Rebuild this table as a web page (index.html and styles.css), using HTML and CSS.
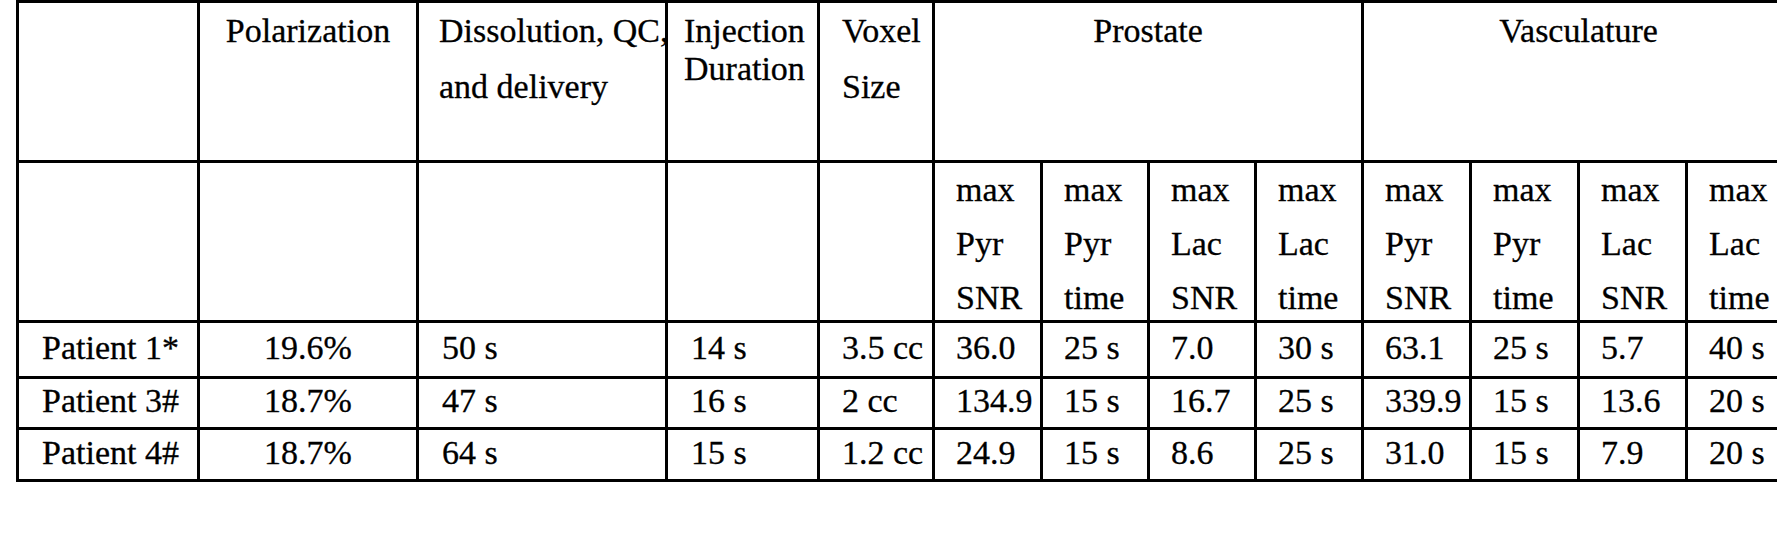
FILE: index.html
```html
<!DOCTYPE html>
<html lang="en">
<head>
  <meta charset="UTF-8">
  <title>Hyperpolarized pyruvate – patient summary</title>
  <link rel="stylesheet" href="styles.css">
</head>
<body>
  <table class="results">
    <colgroup>
      <col class="c-label">
      <col class="c-pol">
      <col class="c-diss">
      <col class="c-inj">
      <col class="c-vox">
      <col class="c-m108">
      <col class="c-m107">
      <col class="c-m107">
      <col class="c-m107">
      <col class="c-m108">
      <col class="c-m108">
      <col class="c-m108">
      <col class="c-m108">
    </colgroup>

    <tr class="group-row">
      <td></td>
      <td class="center">Polarization</td>
      <td class="pad-20">Dissolution, QC,<br>and delivery</td>
      <td class="inj">Injection<br>Duration</td>
      <td class="pad-22">Voxel<br>Size</td>
      <td class="center" colspan="4">Prostate</td>
      <td class="center" colspan="4">Vasculature</td>
    </tr>

    <tr class="metric-row">
      <td></td>
      <td></td>
      <td></td>
      <td></td>
      <td></td>
      <td><div class="lines">max<br>Pyr<br>SNR</div></td>
      <td><div class="lines">max<br>Pyr<br>time</div></td>
      <td><div class="lines">max<br>Lac<br>SNR</div></td>
      <td><div class="lines">max<br>Lac<br>time</div></td>
      <td><div class="lines">max<br>Pyr<br>SNR</div></td>
      <td><div class="lines">max<br>Pyr<br>time</div></td>
      <td><div class="lines">max<br>Lac<br>SNR</div></td>
      <td><div class="lines">max<br>Lac<br>time</div></td>
    </tr>

    <tr class="data-row first">
      <td class="pad-23">Patient 1*</td>
      <td class="center">19.6%</td>
      <td class="pad-23">50 s</td>
      <td class="pad-23">14 s</td>
      <td class="pad-22">3.5 cc</td>
      <td>36.0</td>
      <td>25 s</td>
      <td>7.0</td>
      <td>30 s</td>
      <td>63.1</td>
      <td>25 s</td>
      <td>5.7</td>
      <td>40 s</td>
    </tr>
    <tr class="data-row">
      <td class="pad-23">Patient 3#</td>
      <td class="center">18.7%</td>
      <td class="pad-23">47 s</td>
      <td class="pad-23">16 s</td>
      <td class="pad-22">2 cc</td>
      <td>134.9</td>
      <td>15 s</td>
      <td>16.7</td>
      <td>25 s</td>
      <td>339.9</td>
      <td>15 s</td>
      <td>13.6</td>
      <td>20 s</td>
    </tr>
    <tr class="data-row last">
      <td class="pad-23">Patient 4#</td>
      <td class="center">18.7%</td>
      <td class="pad-23">64 s</td>
      <td class="pad-23">15 s</td>
      <td class="pad-22">1.2 cc</td>
      <td>24.9</td>
      <td>15 s</td>
      <td>8.6</td>
      <td>25 s</td>
      <td>31.0</td>
      <td>15 s</td>
      <td>7.9</td>
      <td>20 s</td>
    </tr>
  </table>
</body>
</html>
```

FILE: styles.css
```css
html,
body {
  margin: 0;
  padding: 0;
  overflow: hidden;
  background-color: #ffffff;
}

body {
  font-family: "Liberation Serif", "Times New Roman", serif;
  font-size: 34px;
  color: #000000;
  -webkit-text-stroke: 0.3px #000000;
}

.results {
  margin-left: 16px;
  width: 1780px;
  table-layout: fixed;
  border-collapse: separate;
  border-spacing: 0;
  border-top: 3px solid #000000;
  border-left: 3px solid #000000;
}

.c-label { width: 181px; }
.c-pol { width: 219px; }
.c-diss { width: 249px; }
.c-inj { width: 152px; }
.c-vox { width: 115px; }
.c-m107 { width: 107px; }
.c-m108 { width: 108px; }

.results td {
  padding: 0 0 0 21px;
  border-right: 3px solid #000000;
  border-bottom: 3px solid #000000;
  white-space: nowrap;
  vertical-align: top;
  overflow: visible;
}

.results td.center {
  padding-left: 0;
  text-align: center;
}

.results td.pad-20 { padding-left: 20px; }
.results td.pad-22 { padding-left: 22px; }
.results td.pad-23 { padding-left: 23px; }

/* top header row */
.group-row {
  height: 160px;
}

.group-row td {
  line-height: 56px;
}

.group-row td.inj {
  padding-left: 16px;
  padding-top: 9px;
  line-height: 38px;
}

/* metric names row */
.metric-row {
  height: 160px;
}

.lines {
  height: 150px;
  line-height: 54px;
}

/* patients */
.data-row {
  height: 51px;
}

.data-row.first {
  height: 56px;
}

.data-row.last {
  height: 52px;
}

.data-row td {
  vertical-align: middle;
  padding-bottom: 4px;
  line-height: 40px;
}
```
